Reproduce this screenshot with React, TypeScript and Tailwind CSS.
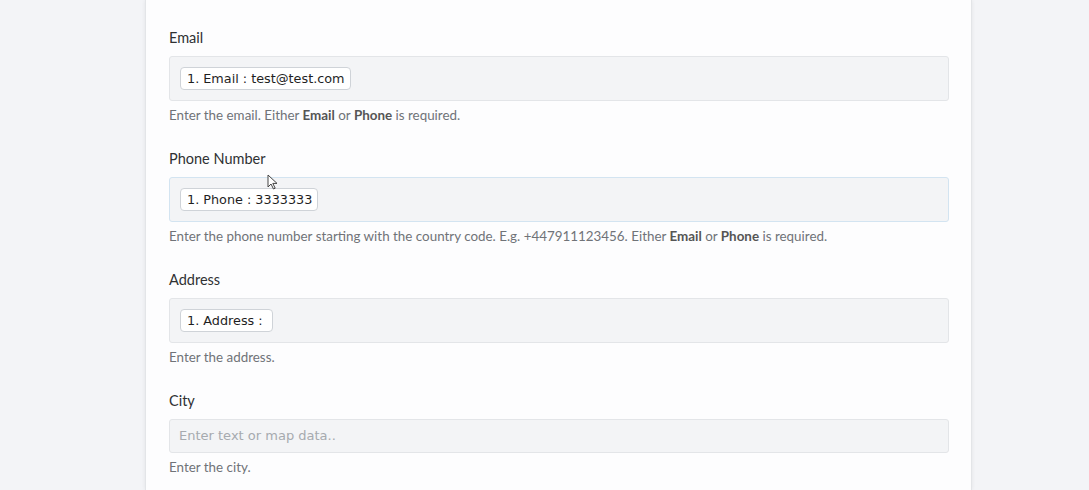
import * as React from 'react';

type Field = {
  label: string;
  chip?: string;
  placeholder?: string;
  focused?: boolean;
  help: React.ReactNode;
};

const Either = () => (
  <>
    Either <b className="font-bold text-[#555]">Email</b> or <b className="font-bold text-[#555]">Phone</b> is required.
  </>
);

const fields: Field[] = [
  {
    label: 'Email',
    chip: '1. Email : test@test.com',
    help: (
      <>
        Enter the email. <Either />
      </>
    ),
  },
  {
    label: 'Phone Number',
    chip: '1. Phone : 3333333',
    focused: true,
    help: (
      <>
        Enter the phone number starting with the country code. E.g. +447911123456. <Either />
      </>
    ),
  },
  {
    label: 'Address',
    chip: '1. Address : ',
    help: 'Enter the address.',
  },
  {
    label: 'City',
    placeholder: 'Enter text or map data..',
    help: 'Enter the city.',
  },
];

function Cursor() {
  return (
    <svg className="absolute left-[121px] top-[174px]" width="11" height="16" viewBox="0 0 11 16">
      <path d="M1 1 L1 13 L4 10 L6.5 15 L8.2 14.2 L5.8 9.4 L10 9.4 Z" fill="#fff" stroke="#444" strokeWidth="1" strokeLinejoin="round" />
    </svg>
  );
}

function FormField({ field }: { field: Field }) {
  return (
    <div className="mb-[25px]">
      <div className="mb-2 text-[14.5px] leading-5 font-normal text-[#2f3133]">{field.label}</div>
      {field.chip ? (
        <div
          className={`flex h-[45px] items-center rounded-[3px] border bg-[#f3f4f6] px-[10px] ${
            field.focused ? 'border-[#d3e4f1]' : 'border-[#e3e5e8]'
          }`}
        >
          <span className="flex h-[23px] items-center whitespace-pre rounded-[4px] border border-[#cfd3d8] bg-white pr-[5px] pl-[6px] font-['DejaVu_Sans',sans-serif] text-[12.8px] text-[#1f1f1f]">
            {field.chip}
          </span>
        </div>
      ) : (
        <div className="flex h-[34px] items-center rounded-[3px] border border-[#e3e5e8] bg-[#f3f4f6] px-[9px] font-['DejaVu_Sans',sans-serif] text-[13px] text-[#a6aaaf]">
          {field.placeholder}
        </div>
      )}
      <div className="mt-[5px] text-[13.4px] leading-[18px] text-[#707378]">{field.help}</div>
    </div>
  );
}

export default function App() {
  return (
    <div className="h-[490px] overflow-hidden bg-[#f3f4f7] font-['Lato',sans-serif]">
      <div className="relative ml-[145px] h-full w-[827px] border-x border-[#e3e5e8] bg-[#fdfdfe] pt-[28px] pl-[23px] pr-[22px] shadow-[0_0_4px_rgba(0,0,0,0.07)]">
        {fields.map((f) => (
          <FormField key={f.label} field={f} />
        ))}
        <Cursor />
      </div>
    </div>
  );
}
